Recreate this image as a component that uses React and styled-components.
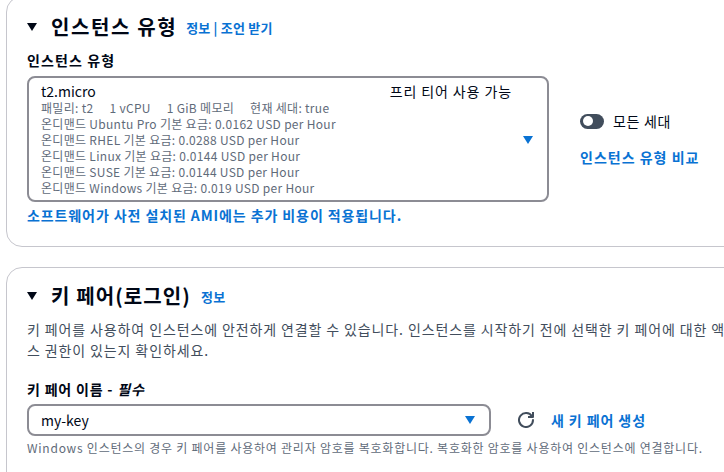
import React from "react";
import styled, { createGlobalStyle } from "styled-components";

const GlobalStyle = createGlobalStyle`
  html, body {
    margin: 0;
    padding: 0;
    background: #ffffff;
    overflow: hidden;
  }
  body {
    font-family: "Noto Sans CJK KR", "Noto Sans", sans-serif;
    color: #000716;
  }
`;

const Page = styled.div`
  width: 800px;
  padding-left: 6px;
  margin-top: -4px;
  display: flex;
  flex-direction: column;
  gap: 20px;
`;

const Card = styled.section`
  border: 1px solid #c6c6cd;
  border-radius: 16px;
  background: #ffffff;
  padding: ${(p) => p.$pad};
`;

const Header = styled.div`
  display: flex;
  align-items: center;
  height: 30px;
`;

const Caret = styled.span`
  width: 0;
  height: 0;
  border-left: 5.5px solid transparent;
  border-right: 5.5px solid transparent;
  border-top: 8px solid ${(p) => p.$color};
  flex: none;
  margin-left: ${(p) => p.$ml || 0}px;
`;

const Title = styled.h2`
  margin: 0 ${(p) => p.$mr}px 0 14px;
  font-size: 20px;
  line-height: 30px;
  font-weight: 700;
  letter-spacing: ${(p) => p.$ls}px;
  color: #000716;
`;

const InfoLinks = styled.span`
  font-size: 13px;
  font-weight: 700;
  letter-spacing: 0.2px;
  color: #0972d3;
  line-height: 20px;
  padding-top: 2px;
`;

const Label = styled.div`
  font-size: 14px;
  font-weight: 700;
  line-height: 20px;
  letter-spacing: ${(p) => p.$ls}px;
  color: #000716;
  margin-top: ${(p) => p.$mt}px;
  em {
    font-style: italic;
  }
`;

const SelectRow = styled.div`
  display: flex;
  align-items: center;
  margin-top: ${(p) => p.$mt}px;
`;

const SelectBox = styled.div`
  box-sizing: border-box;
  width: ${(p) => p.$w}px;
  height: ${(p) => p.$h}px;
  border: 2px solid #8c8c94;
  border-radius: 8px;
  display: flex;
  align-items: center;
  padding: ${(p) => p.$pad};
  flex: none;
`;

const OptionBody = styled.div`
  flex: 1;
  align-self: stretch;
  display: flex;
  flex-direction: column;
`;

const FirstLine = styled.div`
  display: flex;
  justify-content: space-between;
  font-size: 14px;
  line-height: 18px;
  color: #000716;
`;

const Tag = styled.span`
  letter-spacing: 0.9px;
`;

const Detail = styled.div`
  display: flex;
  gap: 16px;
  font-size: 12px;
  line-height: 16px;
  letter-spacing: 0.3px;
  color: #5f6b7a;
  white-space: nowrap;
`;

const ValueText = styled.span`
  flex: 1;
  font-size: 14px;
  line-height: 20px;
  color: #000716;
`;

const SideColumn = styled.div`
  margin-left: 31px;
  display: flex;
  flex-direction: column;
  gap: 16px;
`;

const ToggleRow = styled.div`
  display: flex;
  align-items: center;
  gap: 9px;
  font-size: 14px;
  line-height: 20px;
  letter-spacing: 0.7px;
  color: #000716;
`;

const Toggle = styled.span`
  position: relative;
  width: 24px;
  height: 15px;
  border-radius: 8px;
  background: #414d5c;
  flex: none;
  &::after {
    content: "";
    position: absolute;
    left: 3px;
    top: 2.5px;
    width: 10px;
    height: 10px;
    border-radius: 50%;
    background: #ffffff;
  }
`;

const BoldLink = styled.span`
  display: block;
  font-size: 14px;
  line-height: ${(p) => p.$lh || 20}px;
  font-weight: 700;
  letter-spacing: ${(p) => p.$ls || 1}px;
  color: #0972d3;
  margin-top: ${(p) => p.$mt || 0}px;
  margin-left: ${(p) => p.$ml || 0}px;
`;

const Description = styled.p`
  margin: 8px 0 0;
  width: 719px;
  font-size: 14px;
  line-height: 21px;
  letter-spacing: 0.88px;
  color: #414d5c;
`;

const Helper = styled.div`
  margin-top: 4px;
  font-size: 12px;
  line-height: 16px;
  letter-spacing: 0.76px;
  color: #5f6b7a;
  white-space: nowrap;
`;

const IconSvg = styled.svg`
  flex: none;
  margin-left: 27px;
`;

const RefreshIcon = () => (
  <IconSvg width="16" height="16" viewBox="0 0 16 16">
    <path d="M10 5h5V0" fill="none" stroke="#414d5c" strokeWidth="2" strokeLinejoin="round" />
    <path
      d="M15 8a7 7 0 1 1-1-3.6"
      fill="none"
      stroke="#414d5c"
      strokeWidth="2"
      strokeLinecap="round"
    />
  </IconSvg>
);

const prices = [
  ["Ubuntu Pro", "0.0162"],
  ["RHEL", "0.0288"],
  ["Linux", "0.0144"],
  ["SUSE", "0.0144"],
  ["Windows", "0.019"],
];

export default function App() {
  return (
    <>
      <GlobalStyle />
      <Page>
        <Card $pad="15px 20px 22px">
          <Header>
            <Caret $color="#000716" />
            <Title $ls={1.6} $mr={9}>
              인스턴스 유형
            </Title>
            <InfoLinks>정보 | 조언 받기</InfoLinks>
          </Header>
          <Label $mt={8} $ls={1.1}>
            인스턴스 유형
          </Label>
          <SelectRow $mt={6}>
            <SelectBox $w={522} $h={126} $pad="4px 14px 3px 12px">
              <OptionBody>
                <FirstLine>
                  <span>t2.micro</span>
                  <Tag>프리 티어 사용 가능</Tag>
                </FirstLine>
                <Detail>
                  <span>패밀리: t2</span>
                  <span>1 vCPU</span>
                  <span>1 GiB 메모리</span>
                  <span>현재 세대: true</span>
                </Detail>
                {prices.map(([os, price]) => (
                  <Detail key={os}>
                    <span>
                      온디맨드 {os} 기본 요금: {price} USD per Hour
                    </span>
                  </Detail>
                ))}
              </OptionBody>
              <Caret $color="#0972d3" $ml={11} />
            </SelectBox>
            <SideColumn>
              <ToggleRow>
                <Toggle />
                <span>모든 세대</span>
              </ToggleRow>
              <BoldLink>인스턴스 유형 비교</BoldLink>
            </SideColumn>
          </SelectRow>
          <BoldLink $lh={18} $mt={4} $ls={0.9}>
            소프트웨어가 사전 설치된 AMI에는 추가 비용이 적용됩니다.
          </BoldLink>
        </Card>
        <Card $pad="13px 20px 40px">
          <Header>
            <Caret $color="#000716" />
            <Title $ls={1.1} $mr={10}>
              키 페어(로그인)
            </Title>
            <InfoLinks>정보</InfoLinks>
          </Header>
          <Description>
            키 페어를 사용하여 인스턴스에 안전하게 연결할 수 있습니다. 인스턴스를 시작하기 전에 선택한 키 페어에 대한 액세스 권한이 있는지 확인하세요.
          </Description>
          <Label $mt={18} $ls={0.8}>
            키 페어 이름 - <em>필수</em>
          </Label>
          <SelectRow $mt={5}>
            <SelectBox $w={464} $h={32} $pad="0 14px 0 12px">
              <ValueText>my-key</ValueText>
              <Caret $color="#0972d3" />
            </SelectBox>
            <RefreshIcon />
            <BoldLink $ml={17} $ls={0.9}>
              새 키 페어 생성
            </BoldLink>
          </SelectRow>
          <Helper>
            Windows 인스턴스의 경우 키 페어를 사용하여 관리자 암호를 복호화합니다. 복호화한 암호를 사용하여 인스턴스에 연결합니다.
          </Helper>
        </Card>
      </Page>
    </>
  );
}
